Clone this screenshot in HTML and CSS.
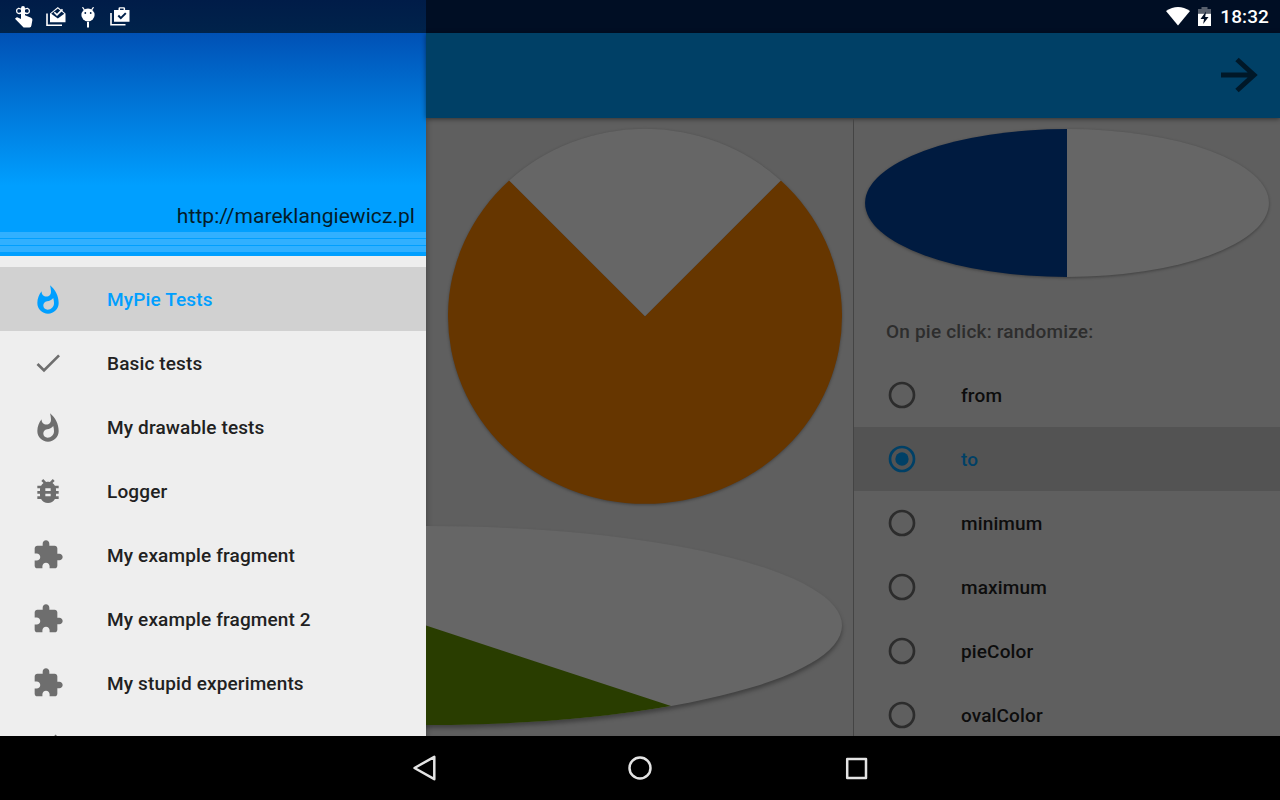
FILE: index.html
```html
<!DOCTYPE html>
<html lang="en">
<head>
<meta charset="utf-8">
<title>MyPie Tests</title>
<link rel="stylesheet" href="styles.css">
</head>
<body>
<svg class="defs" width="0" height="0">
  <symbol id="flame" viewBox="0 0 24 24"><path transform="translate(0 1)" d="M13.5.67s.74 2.65.74 4.8c0 2.06-1.35 3.73-3.41 3.73-2.07 0-3.63-1.67-3.63-3.73l.03-.36C5.21 7.51 4 10.62 4 14c0 4.42 3.58 8 8 8s8-3.58 8-8C20 8.61 17.41 3.8 13.5.67zM11.71 19c-1.78 0-3.22-1.4-3.22-3.14 0-1.62 1.05-2.76 2.81-3.12 1.77-.36 3.6-1.21 4.62-2.58.39 1.29.59 2.65.59 4.04 0 2.65-2.15 4.8-4.8 4.8z"/></symbol>
  <symbol id="check" viewBox="0 0 24 24"><path d="M9 16.17L4.83 12l-1.42 1.41L9 19 21 7l-1.41-1.41z"/></symbol>
  <symbol id="bug" viewBox="0 0 24 24"><path d="M20 8h-2.81c-.45-.78-1.07-1.45-1.82-1.96L17 4.41 15.59 3l-2.17 2.17C12.96 5.06 12.49 5 12 5s-.96.06-1.41.17L8.41 3 7 4.41l1.62 1.63C7.88 6.55 7.26 7.22 6.81 8H4v2h2.09c-.05.33-.09.66-.09 1v1H4v2h2v1c0 .34.04.67.09 1H4v2h2.81c1.04 1.79 2.97 3 5.19 3s4.15-1.21 5.19-3H20v-2h-2.09c.05-.33.09-.66.09-1v-1h2v-2h-2v-1c0-.34-.04-.67-.09-1H20V8zm-6 8h-4v-2h4v2zm0-4h-4v-2h4v2z"/></symbol>
  <symbol id="puzzle" viewBox="0 0 24 24"><path d="M20.5 11H19V7c0-1.1-.9-2-2-2h-4V3.5C13 2.12 11.88 1 10.5 1S8 2.12 8 3.5V5H4c-1.1 0-1.99.9-1.99 2v3.800H3.500c1.490 0 2.700 1.210 2.700 2.700s-1.210 2.700-2.700 2.700H2V20c0 1.1.9 2 2 2h3.800v-1.500c0-1.490 1.210-2.700 2.700-2.700 1.490 0 2.700 1.210 2.700 2.700V22H17c1.1 0 2-.9 2-2v-4h1.500c1.380 0 2.500-1.120 2.500-2.500S21.880 11 20.500 11z"/></symbol>
  <symbol id="more" viewBox="0 0 24 24"><path d="M17.700 2.700l3 3-9 9-4 1 1-4z"/></symbol>
  <symbol id="radio" viewBox="0 0 24 24"><circle cx="12" cy="12" r="9" fill="none" stroke="currentColor" stroke-width="2"/></symbol>
  <symbol id="radio-on" viewBox="0 0 24 24"><circle cx="12" cy="12" r="9" fill="none" stroke="currentColor" stroke-width="2"/><circle cx="12" cy="12" r="5"/></symbol>
</svg>
<div class="screen">
  <header class="status">
    <div class="status-left">
      <svg width="20" height="22" viewBox="0 0 20 22"><path d="M7 2.200Q7 0 9 0t2 2.200V9.300l6 2.400q1.600.7 1.400 2.300l-1 5.500Q17.200 21.600 15.500 21.600H9.600L1 12.800l1.300-1.200q.7-.4 1.500-.1L7 12.900z"/><path fill="none" stroke="#fff" stroke-width="1.300" d="M9 5Q6.500 2 4.200 2.500 2.500 3 2.600 5q.1 2 1.700 2.400Q6.500 8 9 5q2.500-3 4.700-2.500 1.700.5 1.700 2.500 0 2-1.700 2.400Q11.500 8 9 5"/></svg>
      <svg width="20" height="20" viewBox="0 0 20 20"><path fill="none" stroke="#fff" stroke-width="1.600" d="M1 6.500V18.200H16"/><path d="M4 6.500L11.800 0l7.700 6.500V15.200H4z"/><path class="cut" d="M5.200 6.800L11.800 1.600l6.500 5.200-6.500 4.600z"/><path fill="none" stroke="#fff" stroke-width="1.600" d="M8.300 5.200l2.700 2.700 5.500-5.500"/></svg>
      <svg class="robot" width="14" height="21" viewBox="0 0 14 21"><path d="M1.500.2l2 3M12.500.2l-2 3" stroke="#fff" stroke-width="1.200"/><ellipse cx="7" cy="8" rx="6.600" ry="6.400"/><path d="M6 15h2v5.500H6z"/><circle class="cut" cx="4.300" cy="6" r=".9"/><circle class="cut" cx="9.700" cy="6" r=".9"/></svg>
      <svg class="bag" width="20" height="19" viewBox="0 0 20 19"><path fill="none" stroke="#fff" stroke-width="1.600" d="M1 6V17.700H15.500"/><path fill-rule="evenodd" d="M4 3h4.500V1.500Q8.500.2 9.800.2h4Q15.100.2 15.100 1.500V3h4.400v11.800H4zM10 3H13.600V1.600H10z"/><path class="cut-line" d="M8.300 8.500l2.500 2.600 5-5"/></svg>
    </div>
    <div class="status-right">
      <svg class="wifi" width="24" height="19" viewBox="0 0 24 19"><path d="M0 4Q12-3.800 24 4L12 18.500z"/></svg>
      <svg class="battery" width="13" height="19" viewBox="0 0 13 19"><path fill="#58606d" d="M0 2h3.500V0h6v2H13v8H0z"/><path d="M0 6.800h13V19H0z"/><path class="cut" d="M8 4.500L2.500 12H6l-.8 5L10.500 10H7.200z"/></svg>
      <span class="clock">18:32</span>
    </div>
  </header>
  <main class="main">
    <nav class="drawer">
      <div class="cover">
        <div class="url">http://mareklangiewicz.pl</div>
        <div class="stripes"><i></i><i></i><i></i></div>
      </div>
      <div class="menu">
        <div class="item active"><svg><use href="#flame"/></svg><span>MyPie Tests</span></div>
        <div class="item"><svg><use href="#check"/></svg><span>Basic tests</span></div>
        <div class="item"><svg><use href="#flame"/></svg><span>My drawable tests</span></div>
        <div class="item"><svg><use href="#bug"/></svg><span>Logger</span></div>
        <div class="item"><svg><use href="#puzzle"/></svg><span>My example fragment</span></div>
        <div class="item"><svg><use href="#puzzle"/></svg><span>My example fragment 2</span></div>
        <div class="item"><svg><use href="#puzzle"/></svg><span>My stupid experiments</span></div>
        <div class="item"><svg><use href="#more"/></svg></div>
      </div>
    </nav>
    <section class="app">
      <div class="toolbar">
        <svg width="40" height="36" viewBox="0 0 40 36"><path fill="none" stroke="#001828" stroke-width="5" d="M1 18H34M17 2.500L34 18 17 33.500"/></svg>
      </div>
      <div class="content">
        <div class="pies">
          <svg width="427" height="618" viewBox="426 118 427 618">
            <g class="pie"><path fill="#663600" d="M645 316.300L509.200 180.500A197 187.500 0 1 0 780.800 180.500z"/><path fill="#666" d="M645 316.300L509.200 180.500A197 187.500 0 0 1 780.800 180.500z"/></g>
            <g class="pie high"><ellipse cx="426.500" cy="625.500" rx="415.500" ry="99.500" fill="#666"/><path fill="#293d00" d="M426 625.500L671 706A415.500 99.500 0 0 1 426 725z"/></g>
          </svg>
        </div>
        <aside class="panel">
          <svg class="oval" width="426" height="181" viewBox="854 118 426 181">
            <g class="pie"><path fill="#666" d="M1067 129A202 74 0 0 1 1067 277z"/><path fill="#001b40" d="M1067 129A202 74 0 0 0 1067 277z"/></g>
          </svg>
          <h2 class="title">On pie click: randomize:</h2>
          <div class="option"><svg><use href="#radio"/></svg><span>from</span></div>
          <div class="option active"><svg><use href="#radio-on"/></svg><span>to</span></div>
          <div class="option"><svg><use href="#radio"/></svg><span>minimum</span></div>
          <div class="option"><svg><use href="#radio"/></svg><span>maximum</span></div>
          <div class="option"><svg><use href="#radio"/></svg><span>pieColor</span></div>
          <div class="option"><svg><use href="#radio"/></svg><span>ovalColor</span></div>
        </aside>
      </div>
    </section>
  </main>
  <footer class="navbar">
    <svg width="26" height="28" viewBox="0 0 26 28"><path d="M3.500 14L23.300 2.800V25.200z"/></svg>
    <svg width="26" height="28" viewBox="0 0 26 28"><circle cx="13" cy="14" r="10.500"/></svg>
    <svg width="26" height="28" viewBox="0 0 26 28"><rect x="4.200" y="5" width="18.800" height="19"/></svg>
  </footer>
</div>
</body>
</html>
```

FILE: styles.css
```css
* { box-sizing: border-box; }
body { margin: 0; background: #000; font-family: Roboto, sans-serif; }
svg { display: block; flex: none; fill: currentColor; }
.defs { position: absolute; }

.screen { width: 1280px; height: 800px; display: flex; flex-direction: column; overflow: hidden; }

.status {
  height: 33px;
  display: flex;
  justify-content: space-between;
  color: #fff;
  background: linear-gradient(90deg, transparent 426px, #000e24 426px), linear-gradient(#001c48, #00234b);
}
.status-left { display: flex; align-items: center; gap: 12px; padding: 1px 0 0 14px; }
.robot { margin: 0 3px; }
.bag { margin-bottom: 2px; }
.status-right { display: flex; align-items: center; padding-right: 11px; }
.wifi { margin-right: 8px; }
.battery { margin: 0 9px 1px 0; }
.clock { font-size: 19px; font-weight: 500; letter-spacing: .1px; line-height: 33px; }
.cut { fill: #00204a; }
.battery .cut { fill: #000e24; }
.cut-line { fill: none; stroke: #00204a; stroke-width: 2; }

.main { height: 703px; display: flex; }
.drawer {
  width: 426px;
  height: 703px;
  overflow: hidden;
  flex: none;
  background: #eee;
}
.cover {
  height: 223px;
  display: flex;
  flex-direction: column;
  justify-content: flex-end;
  background: linear-gradient(#0051b5 0, #009fff 153px);
}
.url {
  padding: 0 11px 3px 0;
  font-size: 21px;
  letter-spacing: .06px;
  line-height: 25px;
  text-align: right;
  color: #041c2a;
}
.stripes { height: 24px; display: flex; flex-direction: column; gap: 1px; }
.stripes i { height: 6px; background: #31b0ff; }
.menu { padding-top: 11px; }
.item, .option {
  height: 64px;
  display: flex;
  align-items: center;
  gap: 43px;
  padding-left: 32px;
  font-size: 19px;
  font-weight: 500;
  letter-spacing: .14px;
  color: #212121;
}
.item svg, .option svg { width: 32px; height: 32px; color: #6e6e6e; }
.item.active { background: #d1d1d1; color: #009fff; }
.item.active svg { color: #009fff; }

.app { width: 854px; height: 703px; display: flex; flex-direction: column; background: #5f5f5f; }
.toolbar {
  height: 85px;
  flex: none;
  display: flex;
  align-items: center;
  justify-content: flex-end;
  padding: 0 20px 2px 0;
  background: #004066;
  box-shadow: 0 1px 5px #0007;
}
.content { height: 618px; display: flex; box-shadow: inset 5px 0 5px -3px #0003; }
.pies { width: 428px; overflow: hidden; border-right: 1px solid #444; }
.pie { filter: drop-shadow(0 1.500px 1.500px #0005); }
.pie.high { filter: drop-shadow(0 3px 2px #0005); }
.panel { width: 426px; height: 618px; overflow: hidden; }
.title {
  height: 64px;
  margin: 0;
  padding-left: 32px;
  font-size: 19px;
  font-weight: 500;
  letter-spacing: .2px;
  line-height: 66px;
  color: #2d2d2d;
}
.option { color: #0d0d0d; }
.option svg { color: #2c2c2c; }
.option.active { background: #535353; color: #004066; }
.option.active svg { color: #004066; }

.navbar { height: 64px; display: flex; align-items: center; justify-content: center; gap: 190px; background: #000; }
.navbar svg { fill: none; stroke: #e4e4e4; stroke-width: 2.500; stroke-linejoin: round; }
```
